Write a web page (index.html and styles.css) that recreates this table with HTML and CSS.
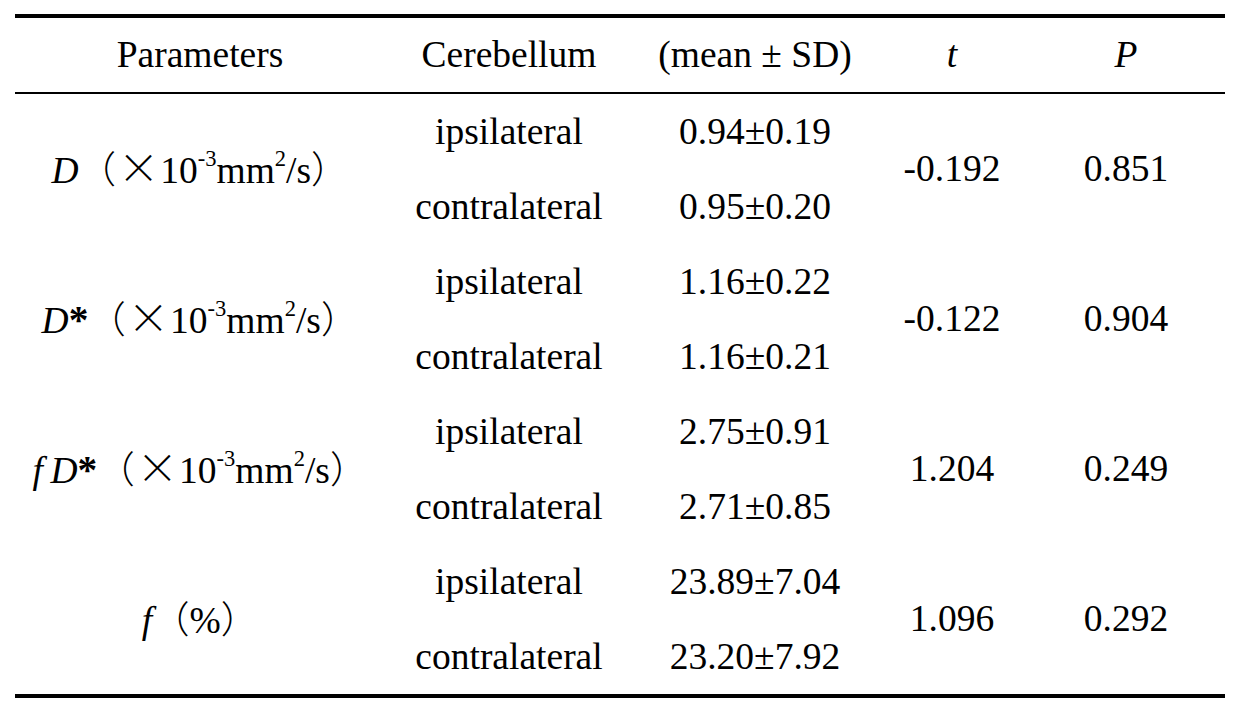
FILE: index.html
```html
<!DOCTYPE html>
<html lang="en">
<head>
<meta charset="utf-8">
<title>Table</title>
<link rel="stylesheet" href="styles.css">
</head>
<body>
<table class="stats">
  <colgroup>
    <col class="c-param">
    <col class="c-side">
    <col class="c-mean">
    <col class="c-t">
    <col class="c-p">
  </colgroup>
  <thead>
    <tr>
      <th>Parameters</th>
      <th>Cerebellum</th>
      <th>(mean ± SD)</th>
      <th><i>t</i></th>
      <th><i>P</i></th>
    </tr>
  </thead>
  <tbody>
    <tr>
      <td rowspan="2"><i>D</i><span class="cjk">（</span><span class="x">×</span>10<sup>-3</sup>mm<sup>2</sup>/s<span class="cjk">）</span></td>
      <td>ipsilateral</td>
      <td>0.94±0.19</td>
      <td rowspan="2">-0.192</td>
      <td rowspan="2">0.851</td>
    </tr>
    <tr>
      <td>contralateral</td>
      <td>0.95±0.20</td>
    </tr>
    <tr>
      <td rowspan="2"><i>D</i><span class="ast">*</span><span class="cjk">（</span><span class="x">×</span>10<sup>-3</sup>mm<sup>2</sup>/s<span class="cjk">）</span></td>
      <td>ipsilateral</td>
      <td>1.16±0.22</td>
      <td rowspan="2">-0.122</td>
      <td rowspan="2">0.904</td>
    </tr>
    <tr>
      <td>contralateral</td>
      <td>1.16±0.21</td>
    </tr>
    <tr>
      <td rowspan="2"><i>f</i>&thinsp;<i>D</i><span class="ast">*</span><span class="cjk">（</span><span class="x">×</span>10<sup>-3</sup>mm<sup>2</sup>/s<span class="cjk">）</span></td>
      <td>ipsilateral</td>
      <td>2.75±0.91</td>
      <td rowspan="2">1.204</td>
      <td rowspan="2">0.249</td>
    </tr>
    <tr>
      <td>contralateral</td>
      <td>2.71±0.85</td>
    </tr>
    <tr>
      <td rowspan="2"><i>f</i><span class="cjk">（</span>%<span class="cjk">）</span></td>
      <td>ipsilateral</td>
      <td>23.89±7.04</td>
      <td rowspan="2">1.096</td>
      <td rowspan="2">0.292</td>
    </tr>
    <tr>
      <td>contralateral</td>
      <td>23.20±7.92</td>
    </tr>
  </tbody>
</table>
</body>
</html>
```
FILE: styles.css
```css
html, body {
  margin: 0;
  padding: 0;
  background: #ffffff;
}

body {
  padding: 14px 0 0 15px;
  font-family: "Liberation Serif", "Noto Sans CJK SC", serif;
  color: #000000;
}

.stats {
  width: 1210px;
  border-collapse: collapse;
  table-layout: fixed;
  border-top: 4px solid #000;
  border-bottom: 4px solid #000;
  font-size: 37.5px;
}

.c-param { width: 370px; }
.c-side { width: 248px; }
.c-mean { width: 244px; }
.c-t { width: 150px; }
.c-p { width: 198px; }

.stats th,
.stats td {
  padding: 0;
  text-align: center;
  vertical-align: middle;
  white-space: nowrap;
  font-weight: normal;
  line-height: 42px;
}

.stats thead th {
  height: 74px;
  border-bottom: 2px solid #000;
}

.stats tbody td {
  height: 75px;
}

.stats sup {
  font-size: 0.6em;
  line-height: 0;
  vertical-align: 0.75em;
}

.cjk {
  font-family: "Noto Sans CJK SC", sans-serif;
  font-weight: 300;
}

.ast {
  font-weight: bold;
  font-size: 1.05em;
}

.x {
  font-family: "Noto Sans CJK SC", sans-serif;
  font-weight: 300;
  font-size: 1.1em;
  line-height: 0;
  margin: 0 1px 0 2px;
}
```
